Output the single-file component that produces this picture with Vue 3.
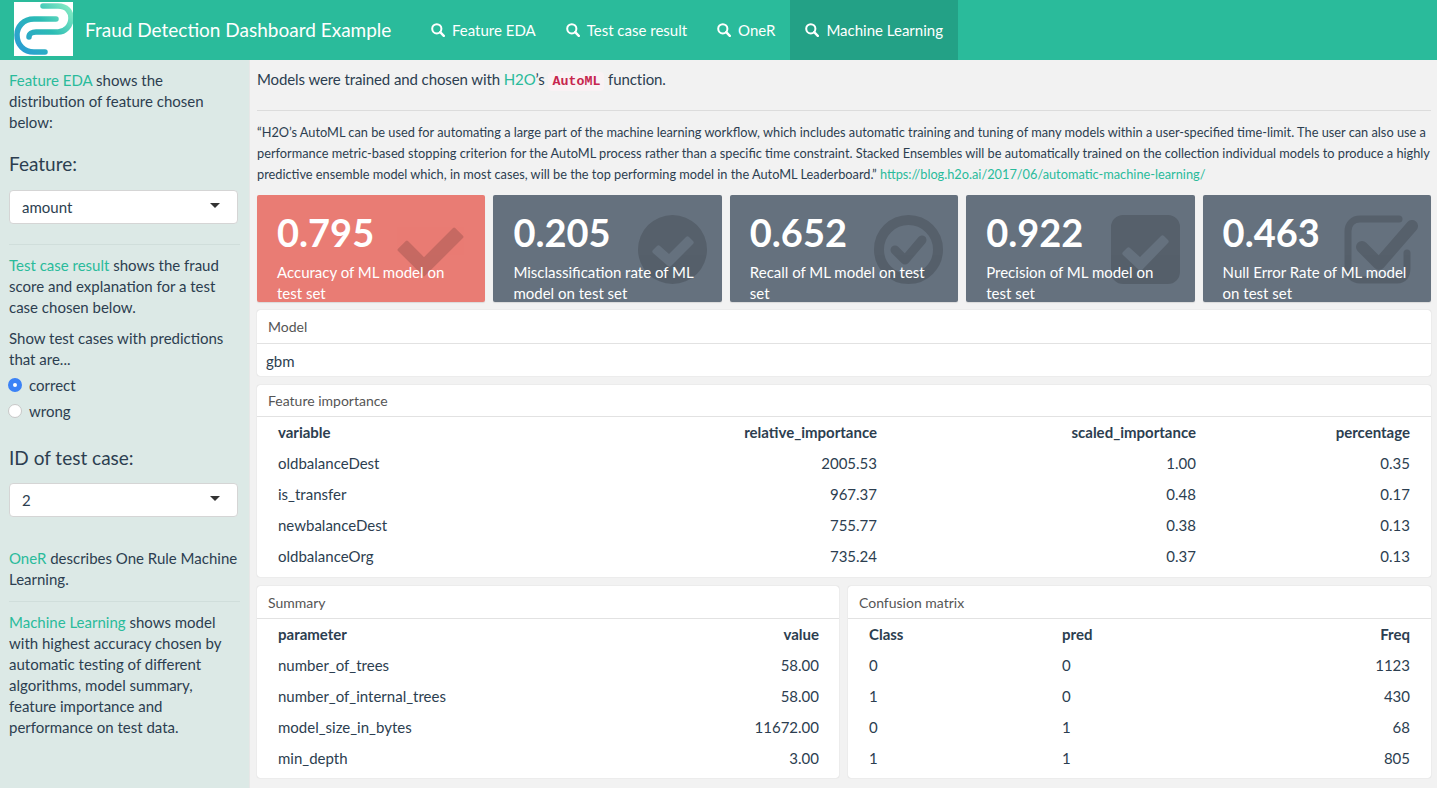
<script setup>
const boxes = [
  { v: '0.795', l: 'Accuracy of ML model on test set', red: true, icon: 'check' },
  { v: '0.205', l: 'Misclassification rate of ML model on test set', icon: 'circle' },
  { v: '0.652', l: 'Recall of ML model on test set', icon: 'circleo' },
  { v: '0.922', l: 'Precision of ML model on test set', icon: 'square' },
  { v: '0.463', l: 'Null Error Rate of ML model on test set', icon: 'squareo' },
]
const nav = ['Feature EDA', 'Test case result', 'OneR', 'Machine Learning']
const fi = [
  ['oldbalanceDest', '2005.53', '1.00', '0.35'],
  ['is_transfer', '967.37', '0.48', '0.17'],
  ['newbalanceDest', '755.77', '0.38', '0.13'],
  ['oldbalanceOrg', '735.24', '0.37', '0.13'],
]
const summary = [
  ['number_of_trees', '58.00'],
  ['number_of_internal_trees', '58.00'],
  ['model_size_in_bytes', '11672.00'],
  ['min_depth', '3.00'],
]
const cm = [
  ['0', '0', '1123'],
  ['1', '0', '430'],
  ['0', '1', '68'],
  ['1', '1', '805'],
]
</script>

<template>
  <div class="page">
    <header class="nav">
      <svg class="logo" viewBox="0 0 59 54">
        <defs>
          <linearGradient id="lg" gradientUnits="userSpaceOnUse" x1="5" y1="50" x2="55" y2="3">
            <stop offset="0" stop-color="#2a9bd4" />
            <stop offset="0.55" stop-color="#2bbcb4" />
            <stop offset="1" stop-color="#86ebc4" />
          </linearGradient>
        </defs>
        <rect width="59" height="54" fill="#fff" />
        <path d="M29 4H44C53 4 57 10 57 16C57 24 51 30 44 30H22C18 30 15 32 15 35" fill="none" stroke="url(#lg)" stroke-width="5.5" stroke-linecap="round" />
        <path d="M42 17H20C9 17 3 25 3 33C3 43 10 50 20 50H31" fill="none" stroke="url(#lg)" stroke-width="5.5" stroke-linecap="round" />
      </svg>
      <div class="brand">Fraud Detection Dashboard Example</div>
      <nav class="tabs">
        <a v-for="(n, i) in nav" :key="n" class="tab" :class="{ active: i === 3 }">
          <svg class="search" viewBox="0 0 14 14"><circle cx="5.8" cy="5.8" r="4.6" fill="none" stroke="#fff" stroke-width="2" /><path d="M9.2 9.2l3.6 3.6" stroke="#fff" stroke-width="2.4" stroke-linecap="round" /></svg>
          {{ n }}
        </a>
      </nav>
    </header>
    <div class="body">
      <aside class="side">
        <p class="p1"><span class="link">Feature EDA</span> shows the distribution of feature chosen below:</p>
        <div class="flabel">Feature:</div>
        <div class="select"><span>amount</span><i class="caret"></i></div>
        <hr class="shr" />
        <p class="p2"><span class="link">Test case result</span> shows the fraud score and explanation for a test case chosen below.</p>
        <p class="p3">Show test cases with predictions that are...</p>
        <div class="radio first"><i class="dot on"></i>correct</div>
        <div class="radio"><i class="dot"></i>wrong</div>
        <div class="flabel id">ID of test case:</div>
        <div class="select"><span>2</span><i class="caret"></i></div>
        <p class="p4"><span class="link">OneR</span> describes One Rule Machine Learning.</p>
        <hr class="shr s2" />
        <p class="p5"><span class="link">Machine Learning</span> shows model with highest accuracy chosen by automatic testing of different algorithms, model summary, feature importance and performance on test data.</p>
      </aside>
      <main class="main">
        <p class="lead">Models were trained and chosen with <span class="link">H2O</span>’s <code class="code">AutoML</code> function.</p>
        <hr class="mhr" />
        <p class="quote">“H2O’s AutoML can be used for automating a large part of the machine learning workflow, which includes automatic training and tuning of many models within a user-specified time-limit. The user can also use a performance metric-based stopping criterion for the AutoML process rather than a specific time constraint. Stacked Ensembles will be automatically trained on the collection individual models to produce a highly predictive ensemble model which, in most cases, will be the top performing model in the AutoML Leaderboard.” <span class="link">https://blog.h2o.ai/2017/06/automatic-machine-learning/</span></p>
        <section class="vboxes">
          <div v-for="b in boxes" :key="b.v" class="vbox" :class="{ red: b.red }">
            <svg v-if="b.icon === 'check'" class="vicon check" viewBox="0 0 70 60"><polygon points="10.9,22.1 28,39.2 58.1,9.1 65.9,16.9 28,54.8 3.1,29.9" fill="#000" stroke="#000" stroke-width="3" stroke-linejoin="round" /></svg>
            <svg v-else-if="b.icon === 'circle'" class="vicon" viewBox="0 0 69 69"><path fill-rule="evenodd" d="M34.5 0a34.5 34.5 0 1 0 0 69a34.5 34.5 0 1 0 0-69zM15 35l4-4c1-1 2-1 3 0l9 8l17-17c1-1 2-1 3 0l4 4c1 1 1 2 0 3L33 51c-1 1-2 1-3 0L15 38c-1-1-1-2 0-3z" fill="#000" /></svg>
            <svg v-else-if="b.icon === 'circleo'" class="vicon" viewBox="0 0 69 69"><circle cx="34.5" cy="34.5" r="29.5" fill="none" stroke="#000" stroke-width="10" /><path d="M21 35l10 10L48 25" fill="none" stroke="#000" stroke-width="9" stroke-linejoin="round" stroke-linecap="round" /></svg>
            <svg v-else-if="b.icon === 'square'" class="vicon" viewBox="0 0 69 69"><path fill-rule="evenodd" d="M12 0H57a12 12 0 0 1 12 12V57a12 12 0 0 1-12 12H12A12 12 0 0 1 0 57V12A12 12 0 0 1 12 0zM12 37l4-4c1-1 2-1 3 0l10 9L50 21c1-1 2-1 3 0l4 4c1 1 1 2 0 3L31 55c-1 1-2 1-3 0L12 40c-1-1-1-2 0-3z" fill="#000" /></svg>
            <svg v-else class="vicon wide" viewBox="0 0 75 70"><path d="M56 4H17C10 4 5 9 5 16V53C5 60 10 65 17 65H54C61 65 64 60 64 53V38" fill="none" stroke="#000" stroke-width="7" stroke-linecap="round" /><path d="M19 32L36 49L69 11" fill="none" stroke="#000" stroke-width="12" stroke-linejoin="round" stroke-linecap="round" /></svg>
            <div class="vtext">
              <div class="val">{{ b.v }}</div>
              <div class="lab">{{ b.l }}</div>
            </div>
          </div>
        </section>
        <section class="card model">
          <div class="chead">Model</div>
          <div class="mbody">gbm</div>
        </section>
        <section class="card fi">
          <div class="chead">Feature importance</div>
          <table class="tbl">
            <thead><tr><th class="l">variable</th><th>relative_importance</th><th>scaled_importance</th><th>percentage</th></tr></thead>
            <tbody>
              <tr v-for="r in fi" :key="r[0]"><td class="l">{{ r[0] }}</td><td>{{ r[1] }}</td><td>{{ r[2] }}</td><td>{{ r[3] }}</td></tr>
            </tbody>
          </table>
        </section>
        <div class="two">
          <section class="card">
            <div class="chead">Summary</div>
            <table class="tbl sum">
              <thead><tr><th class="l">parameter</th><th>value</th></tr></thead>
              <tbody><tr v-for="r in summary" :key="r[0]"><td class="l">{{ r[0] }}</td><td>{{ r[1] }}</td></tr></tbody>
            </table>
          </section>
          <section class="card">
            <div class="chead">Confusion matrix</div>
            <table class="tbl cm">
              <thead><tr><th class="l">Class</th><th class="l">pred</th><th>Freq</th></tr></thead>
              <tbody><tr v-for="(r, i) in cm" :key="i"><td class="l">{{ r[0] }}</td><td class="l">{{ r[1] }}</td><td>{{ r[2] }}</td></tr></tbody>
            </table>
          </section>
        </div>
      </main>
    </div>
  </div>
</template>

<style>
html, body { margin: 0; background: #f2f2f2; overflow: hidden; }
</style>

<style scoped>
.page { width: 1437px; height: 788px; overflow: hidden; font-family: Lato, "Open Sans", sans-serif; font-size: 15px; color: #2c3e50; line-height: 21px; background: #f2f2f2; }
.nav { height: 60px; background: #2abb9b; display: flex; align-items: flex-start; color: #fff; }
.logo { width: 59px; height: 54px; margin: 2px 0 0 14px; flex: none; }
.brand { font-size: 19px; line-height: 59px; margin-left: 12px; width: 331px; white-space: nowrap; }
.tabs { display: flex; }
.tab { display: flex; align-items: center; height: 60px; padding: 0 15px; white-space: nowrap; }
.tab.active { background: #23a186; }
.search { width: 14px; height: 14px; margin-right: 7px; }
.body { display: flex; height: 728px; }
.side { width: 250px; box-sizing: border-box; flex: none; background: #dce9e6; border-right: 1px solid #e7e7e7; padding: 10px 9px 0; }
.side p { margin: 0; }
.link { color: #2abb9b; }
.flabel { font-size: 19px; line-height: 24px; margin-top: 19px; }
.select { height: 34px; box-sizing: border-box; margin: 14px 2px 0 0; background: #fff; border: 1px solid #d5d5d5; border-radius: 4px; display: flex; align-items: center; justify-content: space-between; padding: 0 17px 0 12px; font-size: 15px; }
.caret { width: 0; height: 0; border-left: 5px solid transparent; border-right: 5px solid transparent; border-top: 5px solid #333; display: block; margin-top: -3px; }
.shr { border: 0; border-top: 1px solid #d0dedb; margin: 20px 0 10px; }
.shr.s2 { margin: 11px 0 10px; }
.p3 { margin-top: 10px !important; }
.radio { display: flex; align-items: center; height: 26px; }
.radio.first { margin-top: 2px; }
.dot { width: 14px; height: 14px; margin-left: -1px; box-sizing: border-box; border-radius: 50%; background: #fff; border: 1px solid #c8c8c8; margin-right: 7px; display: block; }
.dot.on { border: 5px solid #3b82f6; background: #fff; }
.flabel.id { margin-top: 22px; margin-bottom: -1px; }
.p4 { margin-top: 31px !important; }
.main { flex: 1; min-width: 0; box-sizing: border-box; padding: 9px 6px 0 7px; }
.lead { margin: 0; letter-spacing: -0.1px; }
.code { font-family: "Liberation Mono", monospace; font-size: 13.3px; font-weight: 700; letter-spacing: 0; color: #c7254e; background: #f9f2f4; border-radius: 4px; padding: 2px 4px; }
.mhr { border: 0; border-top: 1px solid #dcdcdc; margin: 18px 0 11px; }
.quote { margin: 0 -3px 0 0; font-size: 12.78px; }
.vboxes { display: grid; grid-template-columns: repeat(5, 1fr); gap: 8px; margin-top: 10px; }
.vbox { position: relative; height: 107px; background: #65717e; border-radius: 2px; color: #fff; overflow: hidden; box-shadow: 0 1px 1px rgba(0,0,0,.1); }
.vbox.red { background: #e97c74; }
.vtext { position: relative; padding: 14px 20px 0; }
.val { font-size: 38px; font-weight: 700; line-height: 46px; }
.lab { margin-top: 7px; }
.vicon { position: absolute; top: 20px; right: 15px; width: 69px; height: 69px; opacity: .15; }
.vicon.check { top: 25px; right: 19px; width: 70px; height: 60px; }
.vicon.wide { right: 13px; width: 75px; height: 70px; }
.card { background: #fff; border-radius: 3px; box-shadow: 0 0 1px rgba(0,0,0,.25); overflow: hidden; }
.chead { height: 33px; box-sizing: border-box; border-bottom: 1px solid #e2e2e2; padding: 6px 11px 0; font-size: 14px; color: #555; line-height: 21px; }
.model { margin-top: 8px; height: 66px; }
.model .chead { height: 34px; padding-top: 6px; }
.mbody { padding: 7px 9px; }
.fi { margin-top: 9px; height: 192px; }
.fi .chead { height: 32px; padding-top: 5px; }
.tbl { width: 100%; border-collapse: collapse; table-layout: fixed; }
.tbl th, .tbl td { box-sizing: border-box; height: 31px; padding: 0 20px 0 21px; text-align: right; font-weight: 400; }
.tbl th { font-weight: 700; }
.tbl .l { text-align: left; }
.fi .tbl th, .fi .tbl td { padding-right: 21px; }
.fi .tbl th:nth-child(1) { width: 320px; }
.fi .tbl th:nth-child(2) { width: 321px; }
.fi .tbl th:nth-child(3) { width: 319px; }
.cm th:nth-child(1) { width: 193px; }
.cm th, .cm td { padding-right: 21px !important; }
.two { display: grid; grid-template-columns: 582px 583px; gap: 9px; margin-top: 9px; }
.two .card { height: 192px; }
</style>
